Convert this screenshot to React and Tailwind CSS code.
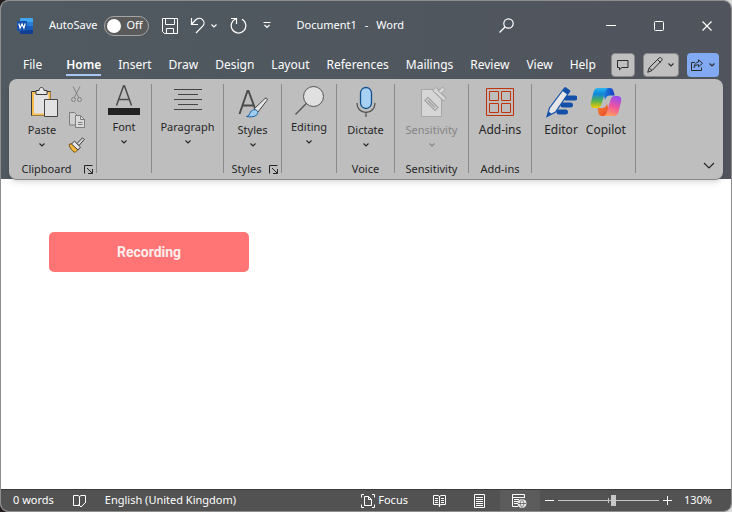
import clsx from 'clsx';

const TABS = [
  'Home',
  'Insert',
  'Draw',
  'Design',
  'Layout',
  'References',
  'Mailings',
  'Review',
  'View',
  'Help',
];

const Icon = ({ w, h, className, children }) => (
  <svg
    width={w}
    height={h}
    viewBox={`0 0 ${w} ${h}`}
    fill="none"
    stroke="currentColor"
    className={clsx('block shrink-0', className)}
    aria-hidden="true"
  >
    {children}
  </svg>
);

const ChevronIcon = ({ className }) => (
  <Icon w={8} h={6} className={className}>
    <path d="M1.5 1.5 4 4l2.5-2.5" strokeWidth="1.1" />
  </Icon>
);

const WordIcon = () => (
  <Icon w={16} h={16}>
    <g stroke="none">
      <path d="M4 0h11a1 1 0 0 1 1 1v3H3V1a1 1 0 0 1 1-1z" fill="#41a5ee" />
      <path d="M3 4h13v4H3z" fill="#2b7cd3" />
      <path d="M3 8h13v4H3z" fill="#185abd" />
      <path d="M3 12h13v3a1 1 0 0 1-1 1H4a1 1 0 0 1-1-1z" fill="#103f91" />
      <rect y="3" width="10" height="10" rx="1" fill="#1550ae" />
    </g>
    <path d="m1.800 5.500 1.300 4.600L5 6l1.900 4.100 1.300-4.600" stroke="#fff" strokeWidth="1.200" />
  </Icon>
);

const SaveIcon = () => (
  <Icon w={16} h={16}>
    <path d="M.5.5h15v15h-13l-2-2zM3.500.5v6h9v-6M4.500 15.500v-5h7v5" />
  </Icon>
);

const UndoIcon = () => (
  <Icon w={16} h={17}>
    <path d="M1.500 1v6.500H8M1.500 7.500l4-4.500c2-2 5-2.200 7-.4 2 1.900 2 4.700.2 6.600L6 16" strokeWidth="1.200" />
  </Icon>
);

const RedoIcon = () => (
  <Icon w={17} h={17}>
    <path d="M1 1.500h5.500V7M6.200 1.800A7.300 7.300 0 1 0 12 2.300" strokeWidth="1.200" />
  </Icon>
);

const CustomizeIcon = () => (
  <Icon w={8} h={7}>
    <path d="M.5.500h7M1.500 3 4 5.500 6.500 3" strokeWidth="1.200" />
  </Icon>
);

const SearchIcon = () => (
  <Icon w={15} h={15}>
    <circle cx="9.500" cy="5.500" r="4.700" strokeWidth="1.200" />
    <path d="M6 9 .5 14.500" strokeWidth="1.200" />
  </Icon>
);

const CommentIcon = () => (
  <Icon w={12} h={12}>
    <path d="M.5 1.500h10.500v7H5l-2.500 2.300V8.500h-2z" />
  </Icon>
);

const PencilIcon = () => (
  <Icon w={16} h={16}>
    <path d="m.700 15.300 1.500-4.500L12 1c.8-.6 1.600-.5 2.200 0 1 .8 1.200 1.700.5 2.500L5 13.500zM2.200 10.800 5 13.500M10.500 2.500l3 3" />
  </Icon>
);

const ShareIcon = () => (
  <Icon w={13} h={12}>
    <path d="M4 3.500H.500v8h10v-3M7.500.800l4 3.500-4 3.500V5.700C5.500 5.700 4 6.500 3 8.500 3.200 5.500 5 3.300 7.500 3z" />
  </Icon>
);

const PasteIcon = () => (
  <Icon w={32} h={32}>
    <path d="M5.500 5.500h19v24h-19z" fill="#e2e2e2" stroke="#3a3a3a" />
    <path d="M7 7h16.500v21.500H7z" stroke="#f6bd4f" strokeWidth="2" />
    <path d="M10 8.500v-4h3c.2-2 1-3 2.500-3s2.300 1 2.500 3h3v4z" fill="#e8e8e8" stroke="#3a3a3a" />
    <path d="M18.500 13.500h13v17h-13z" fill="#e2e2e2" stroke="#454545" />
  </Icon>
);

const CutIcon = () => (
  <Icon w={11} h={17} className="text-[#828282]">
    <path d="M2 .5 8 12M9 .5 3 12" />
    <circle cx="2.500" cy="13.500" r="2" />
    <circle cx="8.500" cy="13.500" r="2" />
  </Icon>
);

const CopyIcon = () => (
  <Icon w={16} h={16} className="text-[#7d7d7d]">
    <path d="M.5.500h5l2 2v10.500h-7z" fill="#cfcfcf" />
    <path d="M6.500 3.500h5l4 4v8h-9z" fill="#dadada" />
    <path d="M11.500 3.500v4h4M9 10.500h4.500M9 12.500h4.500" />
  </Icon>
);

const FormatPainterIcon = () => (
  <Icon w={17} h={16}>
    <path d="m1 7.500 3-1 6 6-3 3C4 14 2 11 1 7.500z" fill="#f3b63f" stroke="#7a5410" />
    <path d="m3.500 7 3-2.800 6 5.800L10 13z" fill="#e6e6e6" stroke="#3c3c3c" />
    <path d="M9 6.500 14.500.800l1.700 1.700L11 8.500z" fill="#d8d8d8" stroke="#3c3c3c" />
  </Icon>
);

const FontIcon = () => (
  <Icon w={32} h={32}>
    <path d="m8.500 22.500 7-19.500h1l7 19.500M11 16.500h10" stroke="#4a4a4a" strokeWidth="1.500" />
    <path d="M0 25h32v8H0z" fill="#222" stroke="none" />
  </Icon>
);

const ParagraphIcon = () => (
  <Icon w={32} h={32}>
    <path d="M2 6.500h28M6 11.500h20M2 16.500h28M6 21.500h20M2 26.500h28" stroke="#444" />
  </Icon>
);

const StylesIcon = () => (
  <Icon w={32} h={32}>
    <path d="m2.500 28 8-23h1l7 19M6 19.500h11" stroke="#4a4a4a" strokeWidth="1.900" />
    <path d="m17 23 11-10.500c1.500-1.200 3 .3 2 1.800L21 26z" fill="#e6e6e6" stroke="#444" />
    <path d="M9.500 30.500c3-.5 2.500-2 4-4.500 2-3 6-3 7-.5 1.500 3-3 6.500-11 5z" fill="#9fcdf0" stroke="#1660a8" />
  </Icon>
);

const EditingIcon = () => (
  <Icon w={32} h={32}>
    <circle cx="20.500" cy="13.500" r="10" fill="#e0e0e0" stroke="#555" />
    <path d="M13.300 20.500 2.500 31.500" stroke="#555" strokeWidth="1.300" />
  </Icon>
);

const DictateIcon = () => (
  <Icon w={32} h={32}>
    <rect x="10.500" y="1.500" width="11" height="21" rx="5.500" fill="#a6d1f3" stroke="#16508c" strokeWidth="1.300" />
    <path d="M7 17c0 5.500 3.500 9.500 9 9.500s9-4 9-9.500M16 26.500V31" stroke="#555" strokeWidth="1.300" />
  </Icon>
);

const SensitivityIcon = () => (
  <Icon w={32} h={32}>
    <path d="M5.500 3.500h20v27h-20z" fill="#d6d6d6" stroke="#a6a6a6" />
    <path d="m17 4 3-2.500 3 3 3.500-3.500 2.500 2.500-3.500 3.500 5 5-3 3-10.500-10z" fill="#d8d8d8" stroke="#a2a2a2" />
    <path d="m19 6.500 8.500 8.500M21.500 4l8 8" stroke="#a2a2a2" />
    <path d="m12 11.500 10 10-3 3-10-10z" fill="#d6d6d6" stroke="#a2a2a2" strokeWidth="1.200" />
    <path d="m12 14.500 7 7" stroke="#a2a2a2" strokeWidth="1.500" />
  </Icon>
);

const AddinsIcon = () => (
  <Icon w={32} h={32} className="text-[#c2330c]">
    <path d="M2.500 2.500h27v27h-27zM5.500 5.500h9v9h-9zM17.500 5.500h9v9h-9zM5.500 17.500h9v9h-9zM17.500 17.500h9v9h-9z" />
  </Icon>
);

const EditorIcon = () => (
  <Icon w={32} h={32}>
    <path d="M21 12h9M18 19h7.500M14 26h6.500" stroke="#1450a8" strokeWidth="5" strokeLinecap="round" />
    <path d="M2 30.500 4.500 22 19.500 2l5 3.500-14 20.500z" fill="#e6e6e6" stroke="#1450a8" strokeWidth="1.200" />
    <path d="m17.500 5 3-4 5 3.700-2.800 4z" fill="#1450a8" stroke="none" />
    <path d="m2 30.500 1.500-5 3 2.200z" fill="#1450a8" stroke="none" />
  </Icon>
);

const CopilotIcon = () => (
  <Icon w={32} h={32}>
    <defs>
      <linearGradient id="cp-left" x1="0" y1="0" x2="0" y2="1">
        <stop offset="0" stopColor="#2bb5ee" />
        <stop offset=".3" stopColor="#0f86dc" />
        <stop offset=".65" stopColor="#58b24d" />
        <stop offset="1" stopColor="#f5cc00" />
      </linearGradient>
      <linearGradient id="cp-right" x1=".6" y1="0" x2=".3" y2="1">
        <stop offset="0" stopColor="#9b4df0" />
        <stop offset=".5" stopColor="#f0559c" />
        <stop offset="1" stopColor="#ffa05a" />
      </linearGradient>
      <linearGradient id="cp-top" x1="0" y1="0" x2="1" y2="0">
        <stop offset="0" stopColor="#1c8fe6" />
        <stop offset="1" stopColor="#1638c0" />
      </linearGradient>
      <linearGradient id="cp-bottom" x1="0" y1="0" x2="1" y2="1">
        <stop offset="0" stopColor="#f8892e" />
        <stop offset="1" stopColor="#e8402f" />
      </linearGradient>
    </defs>
    <g stroke="none">
      <path d="M12 2h8c2 0 2.800 1 3.400 3l1.300 4.500H20c-3 0-4 1.500-5 4.500z" fill="url(#cp-top)" />
      <path d="M20 30h-8c-2 0-3-1-3.500-3L7.500 22H12c3 0 4-1.500 5-4.500z" fill="url(#cp-bottom)" />
      <path d="M8 2h11c-2 0-3 1.500-3.800 4L11.500 18c-.8 2.800-1.800 4-4.500 4H5c-3.500 0-5-2-4-6L3.500 6C4.300 3.300 5.500 2 8 2z" fill="url(#cp-left)" />
      <path d="M24 30H13c2 0 3-1.500 3.800-4L20.500 14c.8-2.800 1.800-4 4.500-4h2c3.500 0 5 2 4 6l-2.500 10c-.8 2.700-2 4-4.500 4z" fill="url(#cp-right)" />
    </g>
  </Icon>
);

const LauncherIcon = () => (
  <Icon w={9} h={9}>
    <path d="M.5 8.500v-8h8M3 3l5 5M8.500 4v4.500H4" />
  </Icon>
);

const ProofingIcon = () => (
  <Icon w={14} h={14}>
    <path d="M6.500 11.500h-6v-10H5l1.500 1v9zM6.500 2.500l1.500-1h4.500V8M5.500 10.500 8 13l5-5" />
  </Icon>
);

const FocusIcon = () => (
  <Icon w={14} h={14}>
    <path d="M3 .5H.500v3M11 .5h2.500v3M3 13.500H.500v-3M11 13.500h2.500v-3M3.500 2.500h4l3 3v6h-7zM7.500 2.500v3h3" />
  </Icon>
);

const ReadIcon = () => (
  <Icon w={13} h={13}>
    <path d="M.5 1.500H5l1.500 1 1.500-1h4.500v9H8l-1.500 1-1.500-1H.500zM6.500 2v11M2 4.500h3M2 6.500h3M2 8.500h3M8 4.500h3M8 6.500h3M8 8.500h3" />
  </Icon>
);

const PrintIcon = () => (
  <Icon w={11} h={14}>
    <path d="M.5.500h10v13H.500zM2 3.500h7M2 5.500h7M2 7.500h7M2 9.500h7M2 11.500h7" />
  </Icon>
);

const WebIcon = () => (
  <Icon w={15} h={14}>
    <path d="M6 12.500H.500V.500h12V4M.5 3.500h12M2 5.500h5M2 7.500h4M2 9.500h4" />
    <circle cx="10" cy="9.500" r="4.500" fill="#e8e8e8" stroke="none" />
    <path
      d="M6 9.500h8M10 5.500c-2.300 2.500-2.300 5.500 0 8M10 5.500c2.300 2.500 2.300 5.500 0 8"
      stroke="#5c5c5c"
      strokeWidth=".800"
    />
  </Icon>
);

const ToolButton = ({ icon, label, menu, disabled }) => (
  <button
    type="button"
    disabled={disabled}
    className={clsx(
      'flex flex-col items-center gap-1 whitespace-nowrap',
      menu ? 'text-[11px]' : 'text-[12px]',
      disabled && 'text-[#858585]'
    )}
  >
    {icon}
    <span className="leading-4">
      {label}
      {menu && <ChevronIcon className="mx-auto mt-1" />}
    </span>
  </button>
);

const Group = ({ width, label, launcher, collapsed, children }) => (
  <>
    <section className={clsx('flex shrink-0 flex-col justify-between', width)}>
      <div className={clsx('flex justify-center', collapsed ? 'pt-1' : 'pt-[7px]')}>{children}</div>
      {label && (
        <div className="flex items-center justify-center pb-[2px] text-[11px] leading-4">
          <span className={clsx(launcher && 'flex-1 text-center')}>{label}</span>
          {launcher && (
            <button type="button" aria-label={`${label} settings`} className="mr-[3px]">
              <LauncherIcon />
            </button>
          )}
        </div>
      )}
    </section>
    <div className="mt-[5px] h-[89px] w-px shrink-0 bg-[#8a8a8a]" />
  </>
);

const TitleBar = () => (
  <div className="flex h-[49px] items-center pr-[19px] pl-4">
    <WordIcon />
    <label className="ml-4 flex items-center gap-[7px] text-[11px]">
      AutoSave
      <span className="relative flex h-5 w-[45px] items-center rounded-full border border-[#a5a5a5] bg-[#5a5a5a] px-[2px]">
        <input type="checkbox" className="size-[14px] appearance-none rounded-full bg-white" />
        <span className="ml-[5px]">Off</span>
      </span>
    </label>
    <button type="button" aria-label="Save" className="ml-[13px]">
      <SaveIcon />
    </button>
    <button type="button" aria-label="Undo" className="ml-3 flex items-center gap-1">
      <UndoIcon />
      <ChevronIcon />
    </button>
    <button type="button" aria-label="Redo" className="ml-3">
      <RedoIcon />
    </button>
    <button type="button" aria-label="Customize toolbar" className="ml-4">
      <CustomizeIcon />
    </button>
    <h1 className="ml-[25px] flex gap-2 text-[11px]">
      <span>Document1</span>
      <span>-</span>
      <span>Word</span>
    </h1>
    <div className="ml-auto flex items-center">
      <button type="button" aria-label="Search" className="mr-[92px]">
        <SearchIcon />
      </button>
      <button type="button" aria-label="Minimize" className="mr-[38px]">
        <Icon w={10} h={10}>
          <path d="M0 4.500h10" />
        </Icon>
      </button>
      <button type="button" aria-label="Maximize" className="mr-[38px]">
        <Icon w={10} h={10}>
          <rect x=".5" y=".5" width="9" height="9" rx="1" />
        </Icon>
      </button>
      <button type="button" aria-label="Close">
        <Icon w={10} h={10}>
          <path d="m.5.5 9 9M9.500.500l-9 9" strokeWidth="1.200" />
        </Icon>
      </button>
    </div>
  </div>
);

const TabBar = () => (
  <nav className="flex h-[29px] items-center pr-3 pl-[22px] text-[12px]">
    <a href="#file" className="mr-6">
      File
    </a>
    <div className="flex gap-[17px]">
      {TABS.map((tab) => (
        <a
          key={tab}
          href={`#${tab.toLowerCase()}`}
          className={clsx(
            'border-b-2 pt-[2px] leading-[18px]',
            tab === 'Home' ? 'border-[#a9c6f5] font-semibold' : 'border-transparent'
          )}
        >
          {tab}
        </a>
      ))}
    </div>
    <div className="ml-auto flex gap-2 text-[#2b2b2b]">
      <button
        type="button"
        aria-label="Comments"
        className="flex h-6 w-6 items-center justify-center rounded border border-[#8a8a8a] bg-[#bfbfbf]"
      >
        <CommentIcon />
      </button>
      <button
        type="button"
        aria-label="Editing mode"
        className="flex h-6 w-9 items-center justify-center gap-1 rounded border border-[#8a8a8a] bg-[#bfbfbf]"
      >
        <PencilIcon />
        <ChevronIcon />
      </button>
      <button
        type="button"
        aria-label="Share"
        className="flex h-6 w-8 items-center justify-center gap-1 rounded bg-[#82aaf3]"
      >
        <ShareIcon />
        <ChevronIcon />
      </button>
    </div>
  </nav>
);

const Ribbon = () => (
  <div className="mx-2 flex h-[101px] rounded-lg border-b border-[#8a8a8a] bg-[#bebebe] text-[#262626] shadow-md">
    <Group width="w-[87px]" label="Clipboard" launcher>
      <div className="flex gap-[10px] pl-[6px]">
        <ToolButton icon={<PasteIcon />} label="Paste" menu />
        <div className="flex flex-col items-center gap-[9px]">
          <button type="button" aria-label="Cut">
            <CutIcon />
          </button>
          <button type="button" aria-label="Copy">
            <CopyIcon />
          </button>
          <button type="button" aria-label="Format painter">
            <FormatPainterIcon />
          </button>
        </div>
      </div>
    </Group>
    <Group width="w-[54px]" collapsed>
      <ToolButton icon={<FontIcon />} label="Font" menu />
    </Group>
    <Group width="w-[71px]" collapsed>
      <ToolButton icon={<ParagraphIcon />} label="Paragraph" menu />
    </Group>
    <Group width="w-[57px]" label="Styles" launcher>
      <ToolButton icon={<StylesIcon />} label="Styles" menu />
    </Group>
    <Group width="w-[54px]" collapsed>
      <ToolButton icon={<EditingIcon />} label="Editing" menu />
    </Group>
    <Group width="w-[57px]" label="Voice">
      <ToolButton icon={<DictateIcon />} label="Dictate" menu />
    </Group>
    <Group width="w-[73px]" label="Sensitivity">
      <ToolButton icon={<SensitivityIcon />} label="Sensitivity" menu disabled />
    </Group>
    <Group width="w-[62px]" label="Add-ins">
      <ToolButton icon={<AddinsIcon />} label="Add-ins" />
    </Group>
    <Group width="w-[103px]">
      <div className="flex gap-2 pl-[3px]">
        <ToolButton icon={<EditorIcon />} label="Editor" />
        <ToolButton icon={<CopilotIcon />} label="Copilot" />
      </div>
    </Group>
    <button type="button" aria-label="Ribbon display options" className="mt-auto mr-2 mb-[10px] ml-auto">
      <Icon w={12} h={7}>
        <path d="m1 1 5 5 5-5" strokeWidth="1.200" />
      </Icon>
    </button>
  </div>
);

const StatusBar = () => (
  <footer className="flex h-[22px] items-center border-t border-[#3a3a3a] bg-[#525252] pr-[19px] pl-3 text-[11px] text-white">
    <span>0 words</span>
    <button type="button" aria-label="Proofing" className="ml-[19px]">
      <ProofingIcon />
    </button>
    <span className="ml-[18px]">English (United Kingdom)</span>
    <div className="ml-auto flex h-full items-center">
      <button type="button" className="mr-[25px] flex items-center gap-[3px]">
        <FocusIcon />
        Focus
      </button>
      <button type="button" aria-label="Read mode" className="mr-7">
        <ReadIcon />
      </button>
      <button type="button" aria-label="Print layout" className="mr-[15px]">
        <PrintIcon />
      </button>
      <button type="button" aria-label="Web layout" className="flex h-full w-10 items-center justify-center bg-[#5c5c5c]">
        <WebIcon />
      </button>
      <button type="button" aria-label="Zoom out" className="ml-[5px]">
        <Icon w={9} h={9}>
          <path d="M0 4.500h9" />
        </Icon>
      </button>
      <input
        type="range"
        aria-label="Zoom"
        min="10"
        max="250"
        defaultValue="142"
        className="mx-1 h-3 w-[101px] appearance-none bg-[linear-gradient(#c4c4c4,#c4c4c4),linear-gradient(#c4c4c4,#c4c4c4)] bg-[length:100%_1px,1px_5px] bg-center bg-no-repeat [&::-webkit-slider-thumb]:h-[11px] [&::-webkit-slider-thumb]:w-[5px] [&::-webkit-slider-thumb]:appearance-none [&::-webkit-slider-thumb]:bg-[#c8c8c8]"
      />
      <button type="button" aria-label="Zoom in">
        <Icon w={9} h={9}>
          <path d="M0 4.500h9M4.500 0v9" />
        </Icon>
      </button>
      <span className="ml-3">130%</span>
    </div>
  </footer>
);

export default function App() {
  return (
    <div className="h-screen bg-linear-to-r from-[#221c1c] to-[#dcdcdc] font-['Noto_Sans','Open_Sans',sans-serif]">
      <div className="flex h-full flex-col overflow-hidden rounded-lg border border-[#8e8e8e] bg-white">
        <header className="h-[178px] shrink-0 bg-linear-to-r from-[#505a60] to-[#50545d] text-white">
          <TitleBar />
          <TabBar />
          <Ribbon />
        </header>
        <main className="flex-1 px-12 pt-[53px]">
          <button
            type="button"
            className="h-10 w-[200px] rounded-[5px] bg-[#ff7474] font-[Roboto] text-[14px] font-bold text-[#ffecec]"
          >
            Recording
          </button>
        </main>
        <StatusBar />
      </div>
    </div>
  );
}
